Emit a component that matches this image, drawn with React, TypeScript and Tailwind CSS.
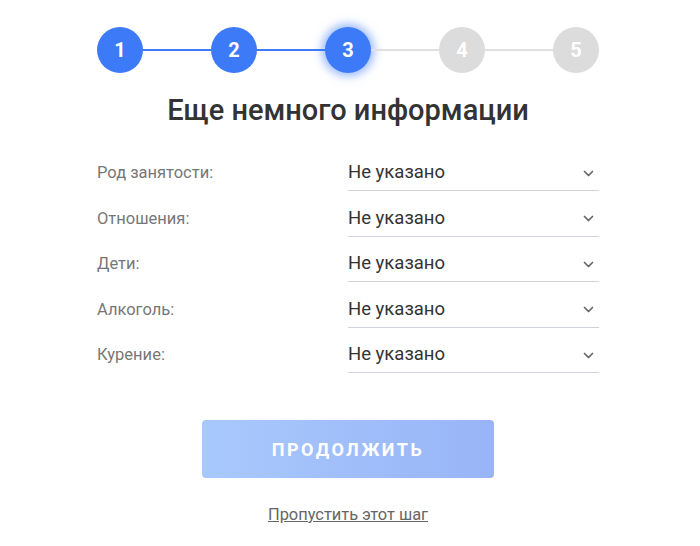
import React from 'react'

const steps = [1, 2, 3, 4, 5]
const current = 3

const fields = ['Род занятости:', 'Отношения:', 'Дети:', 'Алкоголь:', 'Курение:']

function Chevron() {
  return (
    <svg width="11" height="7" viewBox="0 0 11 7" fill="none" className="text-[#666]">
      <path d="M1.5 1.5 5.5 5.5l4-4" stroke="currentColor" strokeWidth="1.7" strokeLinecap="round" strokeLinejoin="round" />
    </svg>
  )
}

export default function App() {
  return (
    <div className="w-[696px] h-[546px] bg-white font-['Roboto','Liberation_Sans',sans-serif] flex flex-col items-center">
      {/* Stepper */}
      <div className="mt-[27px] w-[502px] flex items-center">
        {steps.map((s, i) => {
          const done = s <= current
          return (
            <React.Fragment key={s}>
              {i > 0 && (
                <div className={`flex-1 h-[2px] ${s <= current ? 'bg-[#3f7bf6]' : 'bg-[#e0e0e0]'}`} />
              )}
              <div
                className={`w-[46px] h-[46px] rounded-full flex items-center justify-center text-[20px] font-bold text-white ${
                  done ? 'bg-[#3d7af7]' : 'bg-[#dcdcdc]'
                } ${s === current ? 'shadow-[0_0_10px_3px_rgba(61,122,247,0.55)]' : ''}`}
              >
                {s}
              </div>
            </React.Fragment>
          )
        })}
      </div>

      <h1 className="mt-[19px] text-[29px] leading-[36px] font-medium text-[#333]">Еще немного информации</h1>

      {/* Form */}
      <div className="mt-[28px] w-[502px] flex flex-col gap-[10.5px]">
        {fields.map((f) => (
          <div key={f} className="flex items-center">
            <div className="w-[251px] text-[16.5px] text-[#777]">{f}</div>
            <div className="flex-1 h-[35px] border-b border-[#cdd1e0] flex items-center justify-between pr-[5px]">
              <span className="text-[18.5px] text-[#333]">Не указано</span>
              <Chevron />
            </div>
          </div>
        ))}
      </div>

      <button className="mt-[47px] w-[292px] h-[58px] rounded-[4px] bg-gradient-to-r from-[#a8c9fd] to-[#98b4f6] text-white text-[18px] font-bold tracking-[2.5px]">
        ПРОДОЛЖИТЬ
      </button>

      <a className="mt-[25px] text-[16.4px] text-[#666] underline">Пропустить этот шаг</a>
    </div>
  )
}
